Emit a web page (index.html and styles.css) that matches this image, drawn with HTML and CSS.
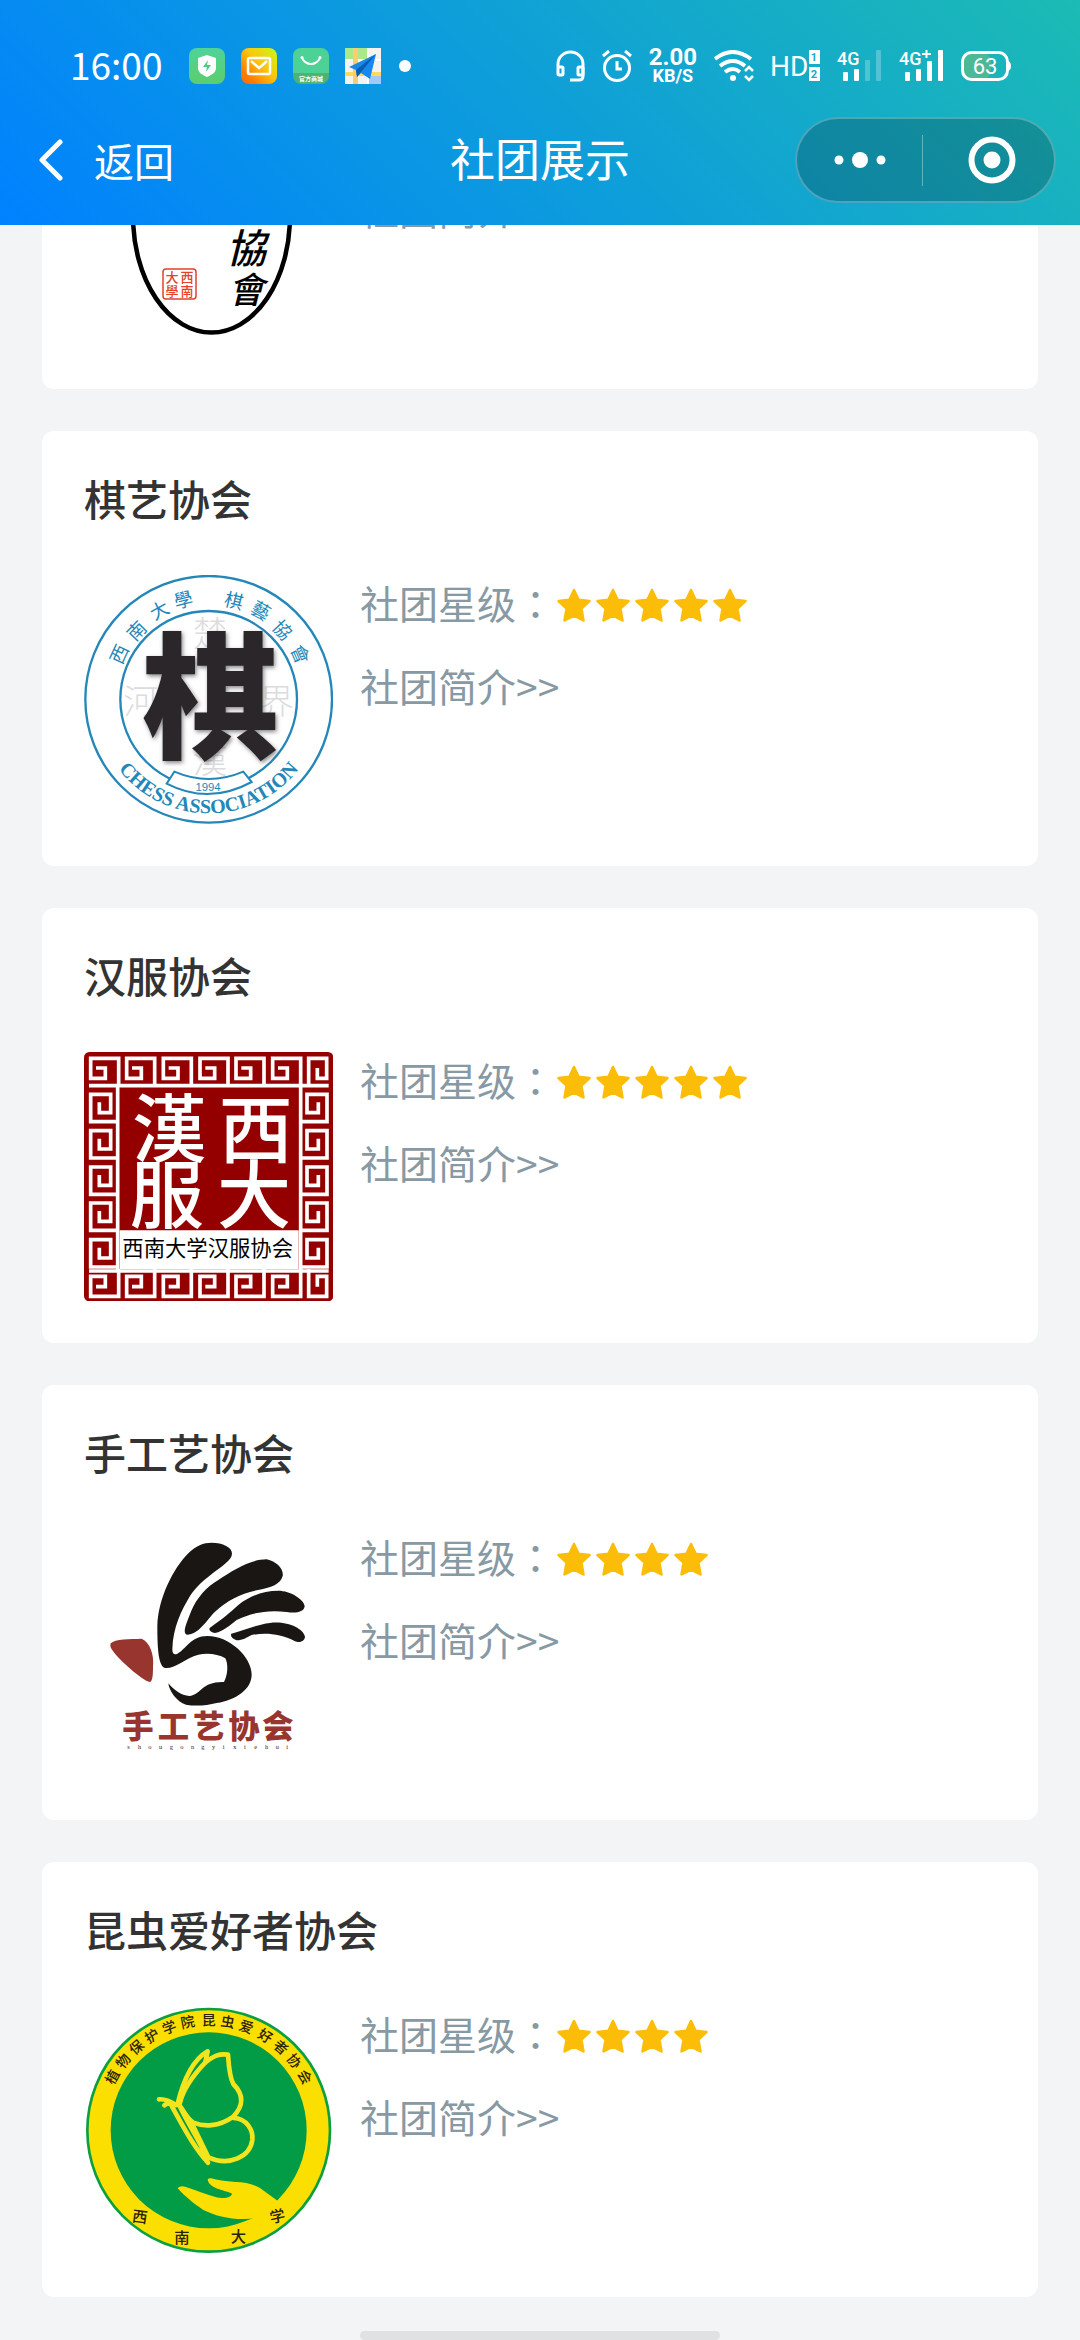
FILE: index.html
```html
<!DOCTYPE html>
<html lang="zh-CN">
<head>
<meta charset="utf-8">
<meta name="viewport" content="width=device-width, initial-scale=1">
<title>社团展示</title>
<link rel="stylesheet" href="styles.css">
</head>
<body>
<svg class="defs" aria-hidden="true">
  <symbol id="star" viewBox="0 0 34 35"><path d="M17 2l4.600 9.800 10.900 1.300-8 7.500 2 11.900L17 27.600 7.500 32.500l2-11.900-8-7.500 10.900-1.300z" fill="#fbbd08" stroke="#fbbd08" stroke-width="2.500" stroke-linejoin="round"/></symbol>
  <symbol id="fret" overflow="visible"><path d="M84 146V64H0V124H44V93H16" fill="none" stroke="#fff" stroke-width="11"/></symbol>
  <symbol id="fret-side" overflow="visible"><path d="M143 82H62V0H122V55H88V24" fill="none" stroke="#fff" stroke-width="11"/></symbol>
</svg>

<header class="header">
  <div class="status">
    <span class="time">16:00</span>
    <svg class="app" viewBox="0 0 36 36"><defs><linearGradient id="g1" x2="0" y2="1"><stop stop-color="#50d39a"/><stop offset="1" stop-color="#5bce6c"/></linearGradient></defs><rect width="36" height="36" rx="8" fill="url(#g1)"/><path d="M18 7l9 3v10c0 5-5 7-9 9-4-2-9-4-9-9V10z" fill="#fff"/><path d="M19 12l-5 7h4l-1 5 5-7h-4z" fill="#4fc983"/></svg>
    <svg class="app" viewBox="0 0 36 36"><defs><linearGradient id="g2" x1="0" y1="1" x2="1" y2="0"><stop stop-color="#ff6a00"/><stop offset=".2" stop-color="#ff7a00"/><stop offset=".55" stop-color="#fbc60c"/><stop offset="1" stop-color="#c6fa19"/></linearGradient></defs><rect width="36" height="36" rx="8" fill="url(#g2)"/><rect x="7" y="10" width="22" height="16" rx="1.500" fill="none" stroke="#fff" stroke-width="2.500"/><path d="M10 13l8 7 8-7" fill="none" stroke="#fff" stroke-width="2.500"/></svg>
    <svg class="app" viewBox="0 0 36 36"><path d="M8 0h20a8 8 0 0 1 8 8v17H0V8a8 8 0 0 1 8-8z" fill="#4ed196"/><path d="M0 25h36v3a8 8 0 0 1-8 8H8a8 8 0 0 1-8-8z" fill="#4db371"/><path d="M9 10c4 8 14 8 18 0" fill="none" stroke="#fff" stroke-width="2"/><circle cx="9" cy="9.500" r="1.500" fill="#fff"/><circle cx="27" cy="9.500" r="1.500" fill="#fff"/><text x="18" y="32.500" text-anchor="middle" font-size="6" font-weight="700" fill="#fff">官方商城</text></svg>
    <svg class="app" viewBox="0 0 36 36"><path fill="#f4f3f0" d="M0 0h36v36H0z"/><path fill="#abe887" d="M0 0h22v11H0z"/><path fill="#a5c8fb" d="M24 28h12v8H24z"/><path fill="#fff" d="M22 0h2v36h-2zM0 11h36v2H0z"/><path fill="#fed960" d="M0 24h36v4H0z"/><path fill="#fdcb70" d="M8 0h5v36H8z"/><path d="M31 6L4 19l7 3 1 7 4-4 9 6z" fill="#1688ee"/><path d="M31 6L11 22l1 7 4-5z" fill="#075eae"/></svg>
    <span class="dot"></span>

    <div class="signals">
      <svg width="29" height="32" viewBox="0 0 29 32" fill="none" stroke="#fff" stroke-width="3"><path d="M2 17v-3a12.500 12 0 0 1 25 0v12q0 4-4 4h-9"/><rect x="2" y="17" width="5" height="8" rx="1"/><rect x="22" y="17" width="5" height="8" rx="1"/></svg>
      <svg width="30" height="32" viewBox="0 0 30 32" fill="none" stroke="#fff" stroke-width="3"><circle cx="15" cy="18" r="12.500"/><path d="M15 11v8h5M1 6l6-5M29 6l-6-5"/></svg>
      <span class="speed"><b>2.00</b><small>KB/S</small></span>
      <svg width="40" height="32" viewBox="0 0 40 32" fill="none" stroke="#fff" stroke-width="4"><path d="M1 9q17.500-14 36 0M6 16q13-10 25 0M11 22q8-6 15 0"/><circle cx="19" cy="28" r="3" fill="#fff" stroke="none"/><path d="M31 21l4-4 4 4M31 26l4 4 4-4" stroke-width="2.500"/></svg>
      <svg class="glyphs" width="49" height="32" viewBox="0 0 49 32"><text x="-1" y="26" font-size="28" fill="#fff">HD</text><path d="M38 0h11v14H38zM38 17h11v14H38z" fill="#fff"/><text x="43" y="11" text-anchor="middle" font-size="11" font-weight="700" fill="#14a9c8">1</text><text x="43" y="28" text-anchor="middle" font-size="11" font-weight="700" fill="#14a9c8">2</text></svg>
      <svg class="glyphs" width="45" height="32" viewBox="0 0 45 32" fill="#fff"><text y="15" font-size="18" font-weight="500">4G</text><rect x="6" y="22" width="5" height="9" rx="1"/><rect x="17" y="19" width="5" height="12" rx="1"/><g opacity=".25"><rect x="28" y="10" width="5" height="21" rx="1"/><rect x="39" y="0" width="5" height="31" rx="1"/></g></svg>
      <svg class="glyphs" width="45" height="32" viewBox="0 0 45 32" fill="#fff"><text y="15" font-size="18" font-weight="500">4G</text><path d="M23 3h9v2h-9zM26.500 0h2v8h-2z"/><rect x="6" y="22" width="5" height="9" rx="1"/><rect x="17" y="19" width="5" height="12" rx="1"/><rect x="28" y="11" width="5" height="20" rx="1"/><rect x="39" y="0" width="5" height="31" rx="1"/></svg>
      <svg class="glyphs" width="50" height="30" viewBox="0 0 50 30"><rect x="2" y="2" width="28" height="26" rx="8" fill="#4cb996"/><rect x="1.500" y="1.500" width="45" height="27" rx="9" fill="none" stroke="#fff" stroke-width="3"/><path d="M47 10q3 1 3 5t-3 5z" fill="#fff"/><text x="24" y="23" text-anchor="middle" font-size="22" fill="#fff">63</text></svg>
    </div>
  </div>

  <nav class="nav">
    <button class="back" type="button"><svg width="24" height="42" viewBox="0 0 24 42"><path d="M21 3L3 21l18 18" fill="none" stroke="#fff" stroke-width="5" stroke-linecap="round" stroke-linejoin="round"/></svg>返回</button>
    <h1 class="title">社团展示</h1>
    <div class="capsule">
      <button type="button" aria-label="更多"><svg width="52" height="18" viewBox="0 0 52 18" fill="#fff"><circle cx="5" cy="9" r="4.500"/><circle cx="26" cy="9" r="8"/><circle cx="47" cy="9" r="4.500"/></svg></button>
      <button type="button" aria-label="关闭"><svg width="48" height="48" viewBox="0 0 48 48"><circle cx="24" cy="24" r="20.500" fill="none" stroke="#fff" stroke-width="6"/><circle cx="24" cy="24" r="8.500" fill="#fff"/></svg></button>
    </div>
  </nav>
</header>

<main class="list">
  <article class="club">
    <div class="body">
      <svg class="emblem" viewBox="84 97 249 249">
        <ellipse cx="211.500" cy="215" rx="78.500" ry="116.500" fill="#fff" stroke="#000" stroke-width="4.500"/>
        <g class="brush"><text x="246" y="262" font-size="40">協</text><text x="246" y="302" font-size="36">會</text></g>
        <rect x="163" y="268" width="33" height="30" rx="3" fill="#fff" stroke="#e5402a" stroke-width="1.500"/>
        <g fill="#e5402a" font-size="13" font-weight="500" text-anchor="middle"><text x="187" y="281">西</text><text x="187" y="295">南</text><text x="172" y="281">大</text><text x="172" y="295">學</text></g>
      </svg>
      <div class="info"><a class="intro" href="#">社团简介&gt;&gt;</a></div>
    </div>
  </article>

  <article class="club">
    <h2 class="name">棋艺协会</h2>
    <div class="body">
      <svg class="emblem" viewBox="42 42 747 747">
        <defs><path id="chess-arc" d="M74 415a342 342 0 0 0 684 0"/><filter id="glow" x="-20%" y="-20%" width="140%" height="140%"><feDropShadow dx="4" dy="6" stdDeviation="7" flood-color="#555" flood-opacity=".7"/></filter></defs>
        <g fill="none" stroke="#2487b8" stroke-width="7"><circle cx="416" cy="415" r="370"/><circle cx="416" cy="415" r="265"/></g>
        <g fill="#dcdcde" font-size="104" font-weight="300" text-anchor="middle"><text x="420" y="254">楚</text><text x="212" y="458">河</text><text x="420" y="636">漢</text><text x="620" y="458">界</text></g>
        <text x="420" y="560" font-size="410" font-weight="900" text-anchor="middle" fill="#2a2529" filter="url(#glow)">棋</text>
        <g fill="#2487b8" font-size="56" text-anchor="middle">
          <text transform="translate(148 280) rotate(-65)" y="20">西</text><text transform="translate(200 210) rotate(-46)" y="20">南</text><text transform="translate(268 148) rotate(-29)" y="20">大</text><text transform="translate(340 117) rotate(-14)" y="20">學</text>
          <text transform="translate(492 120) rotate(14)" y="20">棋</text><text transform="translate(572 150) rotate(30)" y="20">藝</text><text transform="translate(637 207) rotate(47)" y="20">協</text><text transform="translate(690 280) rotate(66)" y="20">會</text>
        </g>
        <path d="M313 632q103 44 207 0l25 31q-129 70-255 5z" fill="#fff" stroke="#2487b8" stroke-width="6"/>
        <text x="414" y="691" font-family="Liberation Sans, sans-serif" font-size="34" text-anchor="middle" fill="#2487b8">1994</text>
        <text font-family="Liberation Serif, serif" font-size="60" font-weight="700" fill="#2487b8" text-anchor="middle"><textPath href="#chess-arc" startOffset="50%">CHESS ASSOCIATION</textPath></text>
      </svg>
      <div class="info">
        <p class="rating">社团星级<span class="colon">：</span><span class="stars"><svg><use href="#star"/></svg><svg><use href="#star"/></svg><svg><use href="#star"/></svg><svg><use href="#star"/></svg><svg><use href="#star"/></svg></span></p>
        <a class="intro" href="#">社团简介&gt;&gt;</a>
      </div>
    </div>
  </article>

  <article class="club">
    <h2 class="name">汉服协会</h2>
    <div class="body">
      <svg class="emblem" viewBox="42 45 747 747">
        <rect x="42" y="45" width="748" height="748" rx="16" fill="#940000"/>
        <path d="M57 146H776M143 146V702M692 146V702M57 702H776" fill="none" stroke="#fff" stroke-width="11"/>
        <g id="fret-row"><use href="#fret" x="62"/><use href="#fret" x="170"/><use href="#fret" x="280"/><use href="#fret" x="390"/><use href="#fret" x="498"/><use href="#fret" x="608"/><path d="M716 146V64H770V124H742V93" fill="none" stroke="#fff" stroke-width="11"/></g>
        <use href="#fret-row" transform="matrix(1 0 0 -1 0 842)"/>
        <g id="fret-column"><use href="#fret-side" y="172"/><use href="#fret-side" y="281"/><use href="#fret-side" y="390"/><use href="#fret-side" y="498"/><use href="#fret-side" y="608"/></g>
        <use href="#fret-column" transform="matrix(-1 0 0 1 833 0)"/>
        <path d="M149 580H686V697H149z" fill="#fff"/>
        <g fill="#fff" font-size="222" font-weight="500" text-anchor="middle"><text x="298" y="356">漢</text><text x="557" y="360">西</text><text x="290" y="556">服</text><text x="552" y="556">大</text></g>
        <text x="413" y="656" font-size="64" text-anchor="middle" fill="#000">西南大学汉服协会</text>
      </svg>
      <div class="info">
        <p class="rating">社团星级<span class="colon">：</span><span class="stars"><svg><use href="#star"/></svg><svg><use href="#star"/></svg><svg><use href="#star"/></svg><svg><use href="#star"/></svg><svg><use href="#star"/></svg></span></p>
        <a class="intro" href="#">社团简介&gt;&gt;</a>
      </div>
    </div>
  </article>

  <article class="club">
    <h2 class="name">手工艺协会</h2>
    <div class="body">
      <svg class="emblem" viewBox="42 27 747 747">
        <g fill="#1a1614">
          <path d="M425 68C458 68 487 82 486 101C485 121 458 136 428 160C395 186 376 204 360 228C335 270 309 320 307 388C307 402 313 406 322 401C348 388 362 348 412 348C480 348 545 412 545 464C545 506 500 540 440 549C410 557 375 559 348 554C320 546 297 512 295 490C310 508 335 529 360 528C395 522 395 484 462 486C474 465 475 432 466 415C445 403 415 398 385 404C345 414 318 446 285 444C266 438 262 390 262 320C264 235 310 145 355 100C378 77 400 68 425 68Z"/>
          <path d="M590 118C620 124 642 148 638 168C632 192 605 203 560 211C510 220 470 244 435 275C410 300 385 345 350 344C336 338 350 308 365 270C380 235 410 200 445 180C490 150 540 118 590 118Z"/>
          <path d="M625 212C660 212 703 238 704 259C702 278 675 280 650 276C590 268 540 280 500 300C480 315 460 335 435 339C423 338 414 328 420 323C460 295 480 278 505 255C540 228 580 212 625 212Z"/>
          <path d="M600 309C650 302 700 325 705 350C704 364 688 369 675 364C630 340 585 338 545 345C528 353 520 361 500 361C487 356 480 347 484 341C520 331 560 314 600 309Z"/>
        </g>
        <path d="M122 370C135 356 180 358 215 356C240 366 253 405 249 440C249 465 248 482 240 486C215 482 120 396 121 377Z" fill="#99352f"/>
        <text x="157 263 369 475 577" y="655" font-size="94" font-weight="900" fill="#99352f">手工艺协会</text>
        <text x="172 204 235 267 299 331 363 394 426 458 490 522 553 585 617 649" y="687" font-family="Liberation Serif, serif" font-size="19" fill="#332220">shougongyixiehui</text>
      </svg>
      <div class="info">
        <p class="rating">社团星级<span class="colon">：</span><span class="stars"><svg><use href="#star"/></svg><svg><use href="#star"/></svg><svg><use href="#star"/></svg><svg><use href="#star"/></svg></span></p>
        <a class="intro" href="#">社团简介&gt;&gt;</a>
      </div>
    </div>
  </article>

  <article class="club">
    <h2 class="name">昆虫爱好者协会</h2>
    <div class="body">
      <svg class="emblem" viewBox="42 48 747 747">
        <circle cx="416" cy="421" r="364" fill="#fadf00" stroke="#0b9f40" stroke-width="8"/>
        <circle cx="416" cy="421" r="294" fill="#029b46"/>
        <g font-size="42" font-weight="500" text-anchor="middle" fill="#2b2300">
          <text x="416" y="106" transform="rotate(-61 416 421)">植</text><text x="416" y="106" transform="rotate(-51 416 421)">物</text><text x="416" y="106" transform="rotate(-41 416 421)">保</text><text x="416" y="106" transform="rotate(-31 416 421)">护</text><text x="416" y="106" transform="rotate(-21 416 421)">学</text><text x="416" y="106" transform="rotate(-11 416 421)">院</text><text x="416" y="106">昆</text><text x="416" y="106" transform="rotate(10 416 421)">虫</text><text x="416" y="106" transform="rotate(20 416 421)">爱</text><text x="416" y="106" transform="rotate(31 416 421)">好</text><text x="416" y="106" transform="rotate(41 416 421)">者</text><text x="416" y="106" transform="rotate(51 416 421)">协</text><text x="416" y="106" transform="rotate(61 416 421)">会</text>
          <g font-size="46"><text transform="translate(210 680) rotate(8)" y="17">西</text><text x="336" y="758">南</text><text x="505" y="757">大</text><text transform="translate(622 678) rotate(-12)" y="17">学</text></g>
        </g>
        <g fill="none" stroke="#f3e51d" stroke-width="14" stroke-linejoin="round" stroke-linecap="round">
          <path d="M322 345C335 290 360 215 413 184L406 217C430 198 448 190 474 194C476 225 478 260 490 282C525 318 518 350 490 380C445 412 400 410 370 398C350 385 340 360 328 346"/>
          <path d="M406 217C375 250 340 295 330 338M490 384C530 385 550 420 547 450C540 500 480 530 415 502L368 405M306 350C340 410 370 470 414 518M330 350C350 395 385 445 408 498"/>
          <path d="M267 328Q290 326 318 345M283 346Q292 336 305 344"/>
        </g>
        <path d="M323 595Q330 586 345 590C390 603 420 620 455 624C480 624 487 615 485 610C460 600 415 595 413 568Q418 562 435 568C480 580 530 570 570 594L640 645L560 684C500 694 440 680 400 660C370 640 340 615 323 595Z" fill="#fadf00"/>
      </svg>
      <div class="info">
        <p class="rating">社团星级<span class="colon">：</span><span class="stars"><svg><use href="#star"/></svg><svg><use href="#star"/></svg><svg><use href="#star"/></svg><svg><use href="#star"/></svg></span></p>
        <a class="intro" href="#">社团简介&gt;&gt;</a>
      </div>
    </div>
  </article>
</main>
<footer class="home"></footer>
</body>
</html>
```
FILE: styles.css
```css
* { box-sizing: border-box; margin: 0; padding: 0; }

body {
  height: 100vh;
  display: flex;
  flex-direction: column;
  overflow: hidden;
  background: #f3f4f6;
  color: #333;
  font-family: "Noto Sans CJK SC", sans-serif;
}

button { border: 0; background: none; color: inherit; font: inherit; }
svg { display: block; flex: none; }
.defs { position: absolute; width: 0; height: 0; }

/* top bar */
.header {
  flex: none;
  z-index: 1;
  padding: 43px 24px 22px;
  background: linear-gradient(45deg, #0081ff, #1cbbb4);
  color: #fff;
}

.status {
  display: flex;
  align-items: center;
  gap: 16px;
  height: 46px;
  margin-bottom: 28px;
  padding: 0 45px 0 46px;
}
.time { font-size: 37px; line-height: 46px; margin-right: 11px; padding-bottom: 4px; }
.app { width: 36px; height: 36px; }
.dot { width: 12px; height: 12px; margin-left: 2px; border-radius: 50%; background: #fff; }
.signals { display: flex; align-items: center; gap: 17px; margin-left: auto; }
.glyphs { font-family: Roboto, sans-serif; overflow: visible; }
.speed { font-family: Roboto, sans-serif; text-align: center; }
.speed b, .speed small { display: block; font-weight: 700; }
.speed b { font-size: 24px; line-height: 20px; }
.speed small { font-size: 18px; line-height: 18px; }

.nav {
  display: grid;
  grid-template-columns: 1fr auto 1fr;
  align-items: center;
  height: 86px;
}
.back {
  display: flex;
  align-items: center;
  gap: 31px;
  padding-left: 15px;
  font-size: 40px;
  line-height: 60px;
}
.title { padding-bottom: 4px; font-size: 45px; line-height: 60px; font-weight: 400; }
.capsule {
  justify-self: end;
  display: flex;
  align-items: center;
  width: 261px;
  height: 86px;
  border: 2px solid rgba(255, 255, 255, .25);
  border-radius: 43px;
  background: rgba(0, 0, 0, .2);
}
.capsule button { flex: 1; height: 51px; display: grid; place-items: center; }
.capsule button + button { padding-left: 6px; border-left: 1px solid rgba(255, 255, 255, .35); }

/* club cards, scrolled to the end of the list */
.list {
  flex: 1;
  min-height: 0;
  overflow: hidden;
  display: flex;
  flex-direction: column;
  justify-content: flex-end;
  gap: 42px;
  padding: 0 42px 34px;
}
.club {
  flex: none;
  padding: 42px;
  border-radius: 12px;
  background: #fff;
}
.name { margin-bottom: 52px; font-size: 42px; line-height: 50px; font-weight: 500; }
.body { display: flex; gap: 27px; }
.emblem { width: 249px; height: 249px; }
.brush { font-weight: 500; font-style: italic; text-anchor: middle; }
.info {
  display: grid;
  grid-template-rows: 54px 54px;
  row-gap: 29px;
  align-content: start;
  color: #8799a3;
  font-size: 39px;
  line-height: 54px;
}
.rating { display: flex; align-items: center; }
.colon { font-family: "Noto Sans CJK TC", sans-serif; }
.stars { display: flex; gap: 5px; padding: 6px 0 0 2px; }
.stars svg { width: 34px; height: 35px; }
.intro { grid-row: 2; justify-self: start; color: inherit; text-decoration: none; }

/* gesture bar */
.home {
  flex: none;
  align-self: center;
  width: 33.333%;
  height: 9px;
  border-radius: 5px;
  background: #e0e1e3;
}
```
